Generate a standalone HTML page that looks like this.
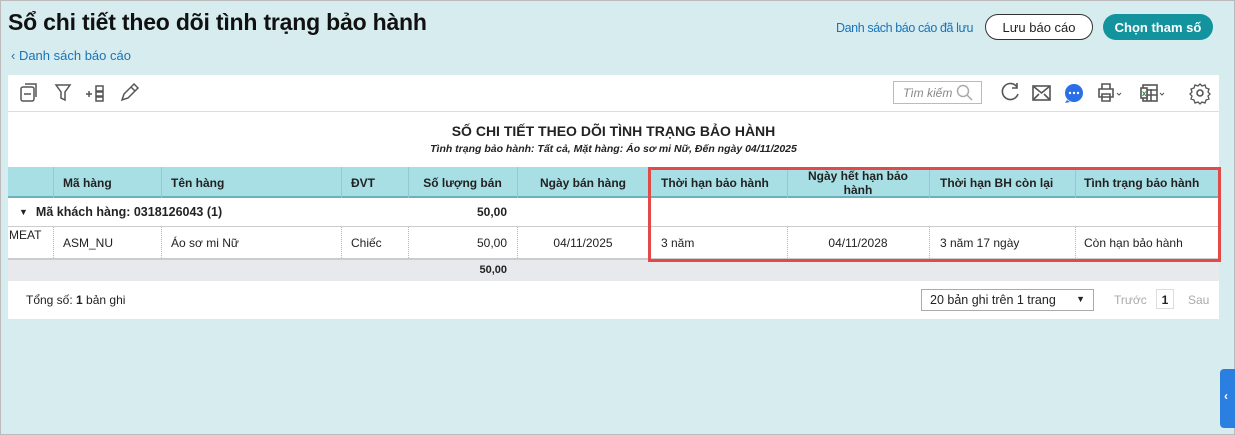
<!DOCTYPE html>
<html><head><meta charset="utf-8"><style>
*{box-sizing:border-box;margin:0;padding:0}
body{width:1235px;height:435px;background:#d6ecef;font-family:"Liberation Sans","Noto Sans CJK SC",sans-serif;position:relative;overflow:hidden;border:1px solid #bbb;color:#222}
.abs{position:absolute}
h1{position:absolute;left:7px;top:8px;font-size:23px;font-weight:bold;color:#111;letter-spacing:-0.2px;white-space:nowrap}
.back{left:10px;top:47px;font-size:13px;color:#1a73b8}
.btn{position:absolute;top:13px;height:26px;border-radius:13px;font-size:13px;display:flex;align-items:center;justify-content:center;white-space:nowrap}
.panel{left:7px;top:74px;width:1211px;height:244px;background:#fff}
.tb{left:7px;top:110px;width:1211px;height:1px;background:#ddd}
.hdr{left:7px;top:166px;width:1211px;height:31px;background:#a8dfe4;border-bottom:2px solid #6ab3bd}
.cell{position:absolute;font-size:12px;display:flex;align-items:center;white-space:nowrap;z-index:2}
.vl{position:absolute;width:1px;z-index:1}
</style></head><body>
<h1>Sổ chi tiết theo dõi tình trạng bảo hành</h1>
<div class="abs back">‹ Danh sách báo cáo</div>
<div class="abs" style="left:835px;top:20px;font-size:12.5px;color:#1a73b8;white-space:nowrap;letter-spacing:-0.4px">Danh sách báo cáo đã lưu</div>
<div class="btn" style="left:984px;width:108px;border:1px solid #333;background:#fff">Lưu báo cáo</div>
<div class="btn" style="left:1102px;width:110px;background:#13939e;color:#fff;font-weight:bold">Chọn tham số</div>
<div class="abs panel"></div>
<div class="abs tb"></div>
<svg class="abs" style="left:18px;top:80px" width="130" height="24" fill="none" stroke="#555" stroke-width="1.5">
<rect x="2" y="6" width="13" height="14" rx="2"/><path d="M6 3h11v13M5 13h7"/>
<path d="M37 4h14l-5 7v8l-4-2v-6z"/>
<path d="M67 13h6M70 10v6M77 5h7v5h-7zM77 11h7v4h-7zM77 16h7v4h-7z"/>
<path d="M103 19l2-6 10-10 4 4-10 10-6 2zM112 6l4 4"/>
</svg>
<div class="abs" style="left:892px;top:80px;width:89px;height:23px;border:1px solid #bbb;font-size:12px;font-style:italic;color:#888;padding:4px 0 0 9px">Tìm kiếm</div>
<svg class="abs" style="left:955px;top:83px" width="18" height="18" fill="none" stroke="#aaa" stroke-width="1.5"><circle cx="7" cy="7" r="5.5"/><path d="M11 11l5 5"/></svg>
<svg class="abs" style="left:996px;top:80px" width="215" height="24" fill="none" stroke="#555" stroke-width="1.6">
<path d="M20 6a8 8 0 1 0 1 7M20 2v5h-5"/>
<rect x="36" y="5" width="17" height="14"/><path d="M36 5l8.5 7 8.5-7M36 19l6-6M53 19l-6-6"/>
<circle cx="77" cy="12" r="9" fill="#2a6ee8" stroke="none"/><path d="M70 19l-2 3 5-1" fill="#2a6ee8" stroke="none"/><g fill="#fff" stroke="none"><circle cx="73" cy="12" r="1.2"/><circle cx="77" cy="12" r="1.2"/><circle cx="81" cy="12" r="1.2"/></g>
<path d="M105 8V3h8v5M102 8h14v8h-14zM105 13h8v7h-8z"/><path d="M120 12l2 2 2-2" stroke-width="1"/>
<rect x="146" y="4" width="14" height="16"/><path d="M150 8v12M154 8v12M146 9h14M146 14h14"/><rect x="144" y="7" width="6" height="10" fill="#fff"/><text x="145" y="15" font-size="8" fill="#1a8a3a" stroke="none" font-weight="bold">x</text><path d="M163 12l2 2 2-2" stroke-width="1"/>
<circle cx="203" cy="12" r="3"/><path d="M203 3l2 2 3-1 1 3 3 1-1 3 2 2-2 2 1 3-3 1-1 3-3-1-2 2-2-2-3 1-1-3-3-1 1-3-2-2 2-2-1-3 3-1 1-3 3 1z" stroke-width="1.3"/>
</svg>
<div class="abs" style="left:7px;top:122px;width:1211px;text-align:center;font-size:14px;font-weight:bold">SỐ CHI TIẾT THEO DÕI TÌNH TRẠNG BẢO HÀNH</div>
<div class="abs" style="left:7px;top:142px;width:1211px;text-align:center;font-size:10.5px;font-weight:bold;font-style:italic">Tình trạng bảo hành: Tất cả, Mặt hàng: Áo sơ mi Nữ, Đến ngày 04/11/2025</div>
<div class="abs hdr"></div>
<div class="abs" style="left:7px;top:225px;width:1211px;height:1px;background:#ccc"></div>
<div class="abs" style="left:7px;top:257px;width:1211px;height:23px;background:#e8e9ed;border-top:2px solid #ccc"></div>
<div style="position:absolute;left:0;top:0;font-size:12px;font-weight:bold">
<div class="cell" style="left:62px;top:166px;height:31px">Mã hàng</div>
<div class="cell" style="left:170px;top:166px;height:31px">Tên hàng</div>
<div class="cell" style="left:350px;top:166px;height:31px">ĐVT</div>
<div class="cell" style="left:407px;top:166px;height:31px;width:109px;justify-content:center">Số lượng bán</div>
<div class="cell" style="left:516px;top:166px;height:31px;width:132px;justify-content:center">Ngày bán hàng</div>
<div class="cell" style="left:660px;top:166px;height:31px">Thời hạn bảo hành</div>
<div class="cell" style="left:786px;top:166px;height:31px;width:142px;justify-content:center;text-align:center;line-height:14px">Ngày hết hạn bảo<br>hành</div>
<div class="cell" style="left:939px;top:166px;height:31px">Thời hạn BH còn lại</div>
<div class="cell" style="left:1083px;top:166px;height:31px">Tình trạng bảo hành</div>
<div class="cell" style="left:18px;top:197px;height:28px;font-size:12.5px"><span style="font-size:9px;margin-right:8px">▼</span>Mã khách hàng: 0318126043 (1)</div>
<div class="cell" style="left:407px;top:197px;height:28px;width:99px;justify-content:flex-end">50,00</div>
<div class="cell" style="left:407px;top:258px;height:22px;width:99px;justify-content:flex-end;font-size:11px">50,00</div>
</div>
<div style="position:absolute;left:0;top:0;font-size:12px">
<div class="cell" style="left:2px;top:227px;height:14px">l MEAT</div>
<div class="cell" style="left:62px;top:226px;height:31px">ASM_NU</div>
<div class="cell" style="left:170px;top:226px;height:31px">Áo sơ mi Nữ</div>
<div class="cell" style="left:350px;top:226px;height:31px">Chiếc</div>
<div class="cell" style="left:407px;top:226px;height:31px;width:99px;justify-content:flex-end">50,00</div>
<div class="cell" style="left:516px;top:226px;height:31px;width:132px;justify-content:center">04/11/2025</div>
<div class="cell" style="left:660px;top:226px;height:31px">3 năm</div>
<div class="cell" style="left:786px;top:226px;height:31px;width:142px;justify-content:center">04/11/2028</div>
<div class="cell" style="left:939px;top:226px;height:31px">3 năm 17 ngày</div>
<div class="cell" style="left:1083px;top:226px;height:31px">Còn hạn bảo hành</div>
</div>
<div class="abs" style="left:0;top:226px;width:7px;height:20px;background:#d6ecef;z-index:3"></div>
<div class="vl" style="left:52px;top:166px;height:31px;background:#8fcad2"></div>
<div class="vl" style="left:160px;top:166px;height:31px;background:#8fcad2"></div>
<div class="vl" style="left:340px;top:166px;height:31px;background:#8fcad2"></div>
<div class="vl" style="left:407px;top:166px;height:31px;background:#8fcad2"></div>
<div class="vl" style="left:516px;top:166px;height:31px;background:#8fcad2"></div>
<div class="vl" style="left:786px;top:166px;height:31px;background:#8fcad2"></div>
<div class="vl" style="left:928px;top:166px;height:31px;background:#8fcad2"></div>
<div class="vl" style="left:1074px;top:166px;height:31px;background:#8fcad2"></div>
<div class="vl" style="left:52px;top:226px;height:31px;border-left:1px dotted #9bbfc5"></div>
<div class="vl" style="left:160px;top:226px;height:31px;border-left:1px dotted #9bbfc5"></div>
<div class="vl" style="left:340px;top:226px;height:31px;border-left:1px dotted #9bbfc5"></div>
<div class="vl" style="left:407px;top:226px;height:31px;border-left:1px dotted #9bbfc5"></div>
<div class="vl" style="left:516px;top:226px;height:31px;border-left:1px dotted #9bbfc5"></div>
<div class="vl" style="left:786px;top:226px;height:31px;border-left:1px dotted #9bbfc5"></div>
<div class="vl" style="left:928px;top:226px;height:31px;border-left:1px dotted #9bbfc5"></div>
<div class="vl" style="left:1074px;top:226px;height:31px;border-left:1px dotted #9bbfc5"></div>
<div class="abs" style="left:647px;top:166px;width:573px;height:95px;border:3px solid #e24a4a;z-index:3"></div>
<div class="abs" style="left:25px;top:292px;font-size:12px">Tổng số: <b>1</b> bản ghi</div>
<div class="abs" style="left:920px;top:288px;width:173px;height:22px;border:1px solid #aaa;font-size:12.5px;padding:3px 0 0 8px;white-space:nowrap">20 bản ghi trên 1 trang<span style="position:absolute;right:8px;top:4px;font-size:9px">▼</span></div>
<div class="abs" style="left:1113px;top:292px;font-size:12px;color:#aaa">Trước</div>
<div class="abs" style="left:1155px;top:288px;width:18px;height:20px;border:1px solid #ddd;font-size:12px;font-weight:bold;text-align:center;padding-top:3px">1</div>
<div class="abs" style="left:1187px;top:292px;font-size:12px;color:#aaa">Sau</div>
<div class="abs" style="left:1219px;top:368px;width:16px;height:59px;background:#2a7fe0;border-radius:4px 0 0 4px;color:#fff;font-size:12px;font-weight:bold;padding:20px 0 0 4px">‹</div>
</body></html>
